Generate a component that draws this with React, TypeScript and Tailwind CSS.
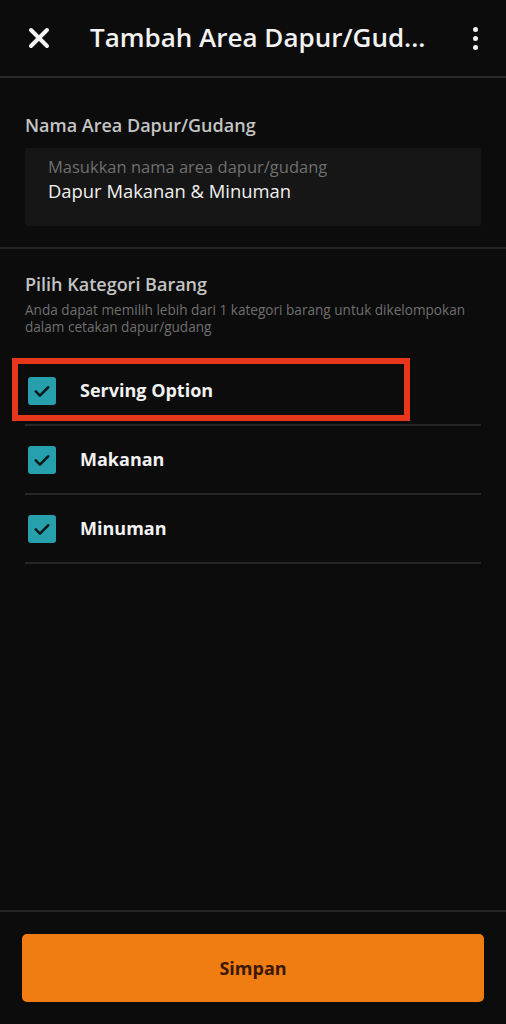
import React from "react";

const font = { fontFamily: '"Open Sans", "Noto Sans", sans-serif' };

function Check() {
  return (
    <div className="w-[28px] h-[28px] rounded-[3px] bg-[#26a0ad] flex items-center justify-center shrink-0">
      <svg width="20" height="20" viewBox="0 0 24 24" fill="none">
        <path d="M4.5 12.5l5 5 10-10" stroke="#0d1a1c" strokeWidth="3" strokeLinecap="round" strokeLinejoin="round" />
      </svg>
    </div>
  );
}

function Row({ label, highlight }: { label: string; highlight?: boolean }) {
  return (
    <div className="relative">
      {highlight && (
        <div className="absolute left-[-13px] top-[1px] w-[398px] h-[63px] border-[6px] border-[#e8361a] pointer-events-none" />
      )}
      <div className="flex items-center h-[69px] border-b-[2px] border-[#262626]">
        <div className="pl-[3px]">
          <Check />
        </div>
        <span className="ml-[24px] text-[18px] font-bold text-[#f2f2f2]">{label}</span>
      </div>
    </div>
  );
}

export default function App() {
  return (
    <div className="w-[506px] h-[1024px] bg-[#0c0c0c] flex flex-col" style={font}>
      <div className="h-[78px] flex items-center border-b-[2px] border-[#2a2a2a] shrink-0">
        <div className="w-[90px] flex justify-center pr-[12px]">
          <svg width="22" height="22" viewBox="0 0 22 22">
            <path d="M3 3L19 19M19 3L3 19" stroke="#f5f5f5" strokeWidth="4" strokeLinecap="round" />
          </svg>
        </div>
        <div className="flex-1 text-[26px] font-semibold text-[#f2f2f2] leading-none whitespace-nowrap pb-[2px]">
          Tambah Area Dapur/Gud...
        </div>
        <div className="w-[68px] flex flex-col items-center gap-[4px] pl-[6px]">
          <span className="w-[5px] h-[5px] rounded-full bg-[#f2f2f2]" />
          <span className="w-[5px] h-[5px] rounded-full bg-[#f2f2f2]" />
          <span className="w-[5px] h-[5px] rounded-full bg-[#f2f2f2]" />
        </div>
      </div>

      <div className="px-[25px] pt-[34px] pb-[21px] border-b-[2px] border-[#262626]">
        <div className="text-[18px] font-semibold text-[#c4c4c4] leading-[26px]">Nama Area Dapur/Gudang</div>
        <div className="mt-[10px] h-[78px] bg-[#161616] rounded-[2px] px-[23px] pt-[8px]">
          <div className="text-[16.5px] text-[#6f6f6f] leading-[22px]">Masukkan nama area dapur/gudang</div>
          <div className="text-[18.4px] text-[#f0f0f0] leading-[25px]">Dapur Makanan &amp; Minuman</div>
        </div>
      </div>

      <div className="px-[25px] pt-[22px]">
        <div className="text-[18px] font-semibold text-[#c4c4c4] leading-[26px]">Pilih Kategori Barang</div>
        <div className="mt-[4px] text-[13.6px] text-[#6f6f6f] leading-[17px]">
          Anda dapat memilih lebih dari 1 kategori barang untuk dikelompokan dalam cetakan dapur/gudang
        </div>
        <div className="mt-[22px]">
          <Row label="Serving Option" highlight />
          <Row label="Makanan" />
          <Row label="Minuman" />
        </div>
      </div>

      <div className="flex-1" />

      <div className="border-t-[2px] border-[#262626] h-[114px] px-[22px] pt-[22px] shrink-0">
        <button className="w-full h-[68px] rounded-[5px] bg-[#ef7d12] text-[18px] font-bold text-[#3a1804]">
          Simpan
        </button>
      </div>
    </div>
  );
}
